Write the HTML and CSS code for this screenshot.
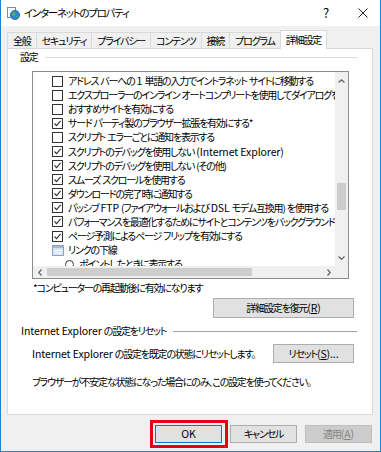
FILE: index.html
```html
<!DOCTYPE html>
<html>
<head>
    <title>インターネットのプロパティ</title>
    <link rel="stylesheet" href="styles.css">
</head>
<body>
<div class="window">
    <div class="titlebar">
        <svg class="app-icon" viewBox="0 0 13 13">
            <rect x="0.5" y="0.5" width="8" height="10" fill="#fff" stroke="#8a8a8a"/>
            <circle cx="8" cy="8" r="4.6" fill="#2f86d4" stroke="#1a5fa8" stroke-width="0.8"/>
            <path d="M5.2 6.2 C6.4 4.8 8 5.2 8.4 6.4 C8.8 7.6 7.4 8 7.8 9.4 C6.4 9.6 5.2 8.6 5.2 6.2 Z" fill="#5cb24a"/>
            <path d="M9.4 9.2 C10.2 8.6 11.4 9 11.2 10.2 C10.6 10.8 9.8 10.6 9.4 9.2 Z" fill="#5cb24a"/>
        </svg>
        <span class="title">インターネットのプロパティ</span>
        <span class="help">?</span>
        <span class="close">
            <svg viewBox="0 0 10 10" width="10" height="10"><path d="M0.5 0.5 L9.5 9.5 M9.5 0.5 L0.5 9.5" stroke="#222" stroke-width="1"/></svg>
        </span>
    </div>

    <div class="tabs">
        <div class="tab">全般</div>
        <div class="tab">セキュリティ</div>
        <div class="tab">プライバシー</div>
        <div class="tab">コンテンツ</div>
        <div class="tab">接続</div>
        <div class="tab">プログラム</div>
        <div class="tab active">詳細設定</div>
    </div>

    <div class="panel">
        <div class="group">
            <span>設定</span>
            <span class="group-line light"></span>
        </div>

        <div class="listbox">
            <div class="list-items">
                <div class="item"><span class="check"></span><span>アドレス バーへの <span class="en">1</span> 単語の入力でイントラネット サイトに移動する</span></div>
                <div class="item"><span class="check"></span><span>エクスプローラーのインライン オートコンプリートを使用してダイアログを実行する</span></div>
                <div class="item"><span class="check"></span><span>おすすめサイトを有効にする</span></div>
                <div class="item"><span class="check on"></span><span>サード パーティ製のブラウザー拡張を有効にする*</span></div>
                <div class="item"><span class="check"></span><span>スクリプト エラーごとに通知を表示する</span></div>
                <div class="item"><span class="check on"></span><span>スクリプトのデバッグを使用しない <span class="en">(Internet Explorer)</span></span></div>
                <div class="item"><span class="check on"></span><span>スクリプトのデバッグを使用しない (その他)</span></div>
                <div class="item"><span class="check on"></span><span>スムーズ スクロールを使用する</span></div>
                <div class="item"><span class="check on"></span><span>ダウンロードの完了時に通知する</span></div>
                <div class="item"><span class="check on"></span><span>パッシブ <span class="en">FTP</span> (ファイアウォールおよび <span class="en">DSL</span> モデム互換用) を使用する</span></div>
                <div class="item"><span class="check on"></span><span>パフォーマンスを最適化するためにサイトとコンテンツをバックグラウンドで読み込む</span></div>
                <div class="item"><span class="check on"></span><span>ページ予測によるページ フリップを有効にする</span></div>
                <div class="item">
                    <svg class="group-icon" viewBox="0 0 12 11">
                        <rect x="0.5" y="0.5" width="11" height="10" fill="#d7e3f1" stroke="#8aa3c6"/>
                        <rect x="1" y="1" width="10" height="2" fill="#9fb8d8"/>
                        <path d="M2 5.5 H10 M2 8 H10" stroke="#fff" stroke-width="1"/>
                    </svg><span>リンクの下線</span>
                </div>
                <div class="item sub"><span class="radio"></span><span>ポイントしたときに表示する</span></div>
            </div>
            <div class="vscroll">
                <div class="arrow">
                    <svg viewBox="0 0 7 4" width="7" height="4"><polyline points="0.5,3.5 3.5,0.8 6.5,3.5" fill="none" stroke="#606060" stroke-width="1.2"/></svg>
                </div>
                <div class="track">
                    <div class="thumb" style="margin-top:94px;height:27px"></div>
                </div>
                <div class="arrow">
                    <svg viewBox="0 0 7 4" width="7" height="4"><polyline points="0.5,0.5 3.5,3.2 6.5,0.5" fill="none" stroke="#606060" stroke-width="1.2"/></svg>
                </div>
            </div>
            <div class="hscroll">
                <div class="arrow">
                    <svg viewBox="0 0 4 7" width="4" height="7"><polyline points="3.5,0.5 0.8,3.5 3.5,6.5" fill="none" stroke="#606060" stroke-width="1.2"/></svg>
                </div>
                <div class="track">
                    <div class="thumb" style="margin-left:1px;width:205px"></div>
                </div>
                <div class="arrow">
                    <svg viewBox="0 0 4 7" width="4" height="7"><polyline points="0.5,0.5 3.2,3.5 0.5,6.5" fill="none" stroke="#606060" stroke-width="1.2"/></svg>
                </div>
            </div>
            <div class="corner"></div>
        </div>

        <p class="note">*コンピューターの再起動後に有効になります</p>

        <div class="restore-row">
            <button class="btn restore">詳細設定を復元<span class="en">(<u>R</u>)</span></button>
        </div>

        <div class="group reset">
            <span><span class="en">Internet Explorer</span> の設定をリセット</span>
            <span class="group-line"></span>
        </div>

        <div class="reset-row">
            <span><span class="en">Internet Explorer</span> の設定を既定の状態にリセットします。</span>
            <button class="btn reset-btn">リセット<span class="en">(<u>S</u>)...</span></button>
        </div>

        <p class="hint">ブラウザーが不安定な状態になった場合にのみ、この設定を使ってください。</p>
    </div>

    <div class="footer">
        <span class="ok-wrap">
            <button class="btn default"><span class="en">OK</span></button>
            <span class="mark"></span>
        </span>
        <button class="btn">キャンセル</button>
        <button class="btn" disabled>適用<span class="en">(<u>A</u>)</span></button>
    </div>
</div>
</body>
</html>
```

FILE: styles.css
```css
body {
    margin: 0;
    background-color: #fff;
    color: #000;
    font-family: "Noto Sans CJK JP", sans-serif;
    font-size: 10px;
    line-height: 14px;
    font-feature-settings: "palt";
    letter-spacing: -1.2px;
    word-spacing: 1px;
    white-space: nowrap;
}
.en {
    font-size: 10.5px;
    letter-spacing: -0.1px;
    word-spacing: 0;
}
.window {
    width: 381px;
    height: 452px;
    box-sizing: border-box;
    border: 1px solid #1883d7;
    border-top: none;
    background-color: #f0f0f0;
    display: flex;
    flex-direction: column;
    overflow: hidden;
}

/* title bar */
.titlebar {
    height: 26px;
    flex-shrink: 0;
    background-color: #fff;
    display: flex;
    align-items: center;
    padding-left: 6px;
}
.app-icon {
    width: 13px;
    height: 13px;
    margin-right: 4px;
}
.title {
    flex: 1;
    font-size: 10.5px;
    letter-spacing: -1.3px;
}
.help {
    width: 20px;
    text-align: center;
    font-size: 13px;
    letter-spacing: 0;
    margin-right: 10px;
}
.close {
    width: 34px;
    display: flex;
    justify-content: center;
}

/* tabs */
.tabs {
    display: flex;
    align-items: flex-end;
    height: 23px;
    flex-shrink: 0;
    padding-left: 6px;
    margin-bottom: -1px;
}
.tab {
    flex-shrink: 0;
    height: 16px;
    line-height: 16px;
    padding: 0 5px;
    border: 1px solid #d9d9d9;
    border-bottom: none;
    margin-right: -1px;
    background-color: #f0f0f0;
}
.tab.active {
    height: 18px;
    line-height: 17px;
    background-color: #fff;
    position: relative;
    z-index: 1;
}

/* panel */
.panel {
    margin: 0 7px 0 6px;
    height: 367px;
    flex-shrink: 0;
    box-sizing: border-box;
    border: 1px solid #d9d9d9;
    background-color: #fff;
    display: flex;
    flex-direction: column;
}
.group {
    display: flex;
    align-items: center;
    height: 14px;
    margin: 1px 14px 0 12px;
}
.group-line {
    flex: 1;
    height: 1px;
    margin-left: 7px;
    background-color: #a0a0a0;
}
.group-line.light {
    background-color: #dcdcdc;
}
.group.reset {
    margin: 6px 15px 0 13px;
}

/* list box */
.listbox {
    margin: 7px 0 0 24px;
    width: 317px;
    height: 208px;
    box-sizing: border-box;
    border: 1px solid #8c8c8c;
    display: grid;
    grid-template-columns: 1fr 13px;
    grid-template-rows: 1fr 12px;
}
.list-items {
    overflow: hidden;
    padding-top: 2px;
}
.item {
    height: 14.1px;
    display: flex;
    align-items: center;
    padding-left: 19px;
}
.item.sub {
    padding-left: 32px;
}
.check {
    flex-shrink: 0;
    width: 11px;
    height: 11px;
    box-sizing: border-box;
    border: 1px solid #333;
    margin-right: 5px;
    background-color: #fff;
}
.check.on {
    background: url("data:image/svg+xml,%3Csvg xmlns='http://www.w3.org/2000/svg' viewBox='0 0 9 9'%3E%3Cpolyline points='1.5,4.5 3.6,6.6 7.6,1.8' fill='none' stroke='%23333' stroke-width='1.1'/%3E%3C/svg%3E") center / 9px 9px no-repeat #fff;
}
.group-icon {
    flex-shrink: 0;
    width: 12px;
    height: 11px;
    margin-right: 4px;
}
.radio {
    flex-shrink: 0;
    width: 9px;
    height: 9px;
    box-sizing: border-box;
    border: 1px solid #333;
    border-radius: 50%;
    margin-right: 5px;
}
.vscroll {
    background-color: #f0f0f0;
    display: flex;
    flex-direction: column;
}
.vscroll .arrow {
    height: 17px;
    display: flex;
    align-items: center;
    justify-content: center;
}
.vscroll .track {
    flex: 1;
}
.vscroll .thumb {
    margin-left: 2px;
    margin-right: 2px;
    background-color: #cdcdcd;
}
.hscroll {
    background-color: #f0f0f0;
    display: flex;
}
.hscroll .arrow {
    width: 13px;
    display: flex;
    align-items: center;
    justify-content: center;
}
.hscroll .track {
    flex: 1;
    padding: 2px 0;
}
.hscroll .thumb {
    height: 100%;
    background-color: #cdcdcd;
}
.corner {
    background-color: #f0f0f0;
}

p {
    margin: 0;
}
.note {
    margin: 2px 0 0 25px;
}
.restore-row {
    display: flex;
    justify-content: flex-end;
    margin: 3px 18px 0 0;
}
.reset-row {
    display: flex;
    align-items: center;
    justify-content: space-between;
    margin: 6px 18px 0 24px;
}
.hint {
    margin: 12px 0 0 24px;
}

/* buttons */
.btn {
    font: inherit;
    letter-spacing: inherit;
    word-spacing: inherit;
    font-feature-settings: inherit;
    color: #000;
    background-color: #e1e1e1;
    border: 1px solid #adadad;
    padding: 0;
    width: 67px;
    height: 18px;
    line-height: 14px;
}
.btn.restore {
    width: 141px;
    height: 20px;
}
.btn.reset-btn {
    width: 81px;
    height: 19px;
}
.btn.default {
    border-color: #0078d7;
}
.btn:disabled {
    background-color: #cccccc;
    border-color: #bfbfbf;
    color: #838383;
}

.footer {
    display: flex;
    justify-content: flex-end;
    gap: 8px;
    padding: 10px 8px 0 0;
}
.ok-wrap {
    position: relative;
    display: flex;
}
.mark {
    position: absolute;
    left: -5px;
    right: -6px;
    top: -5px;
    bottom: -5px;
    border: 3px solid #e60012;
}
```
